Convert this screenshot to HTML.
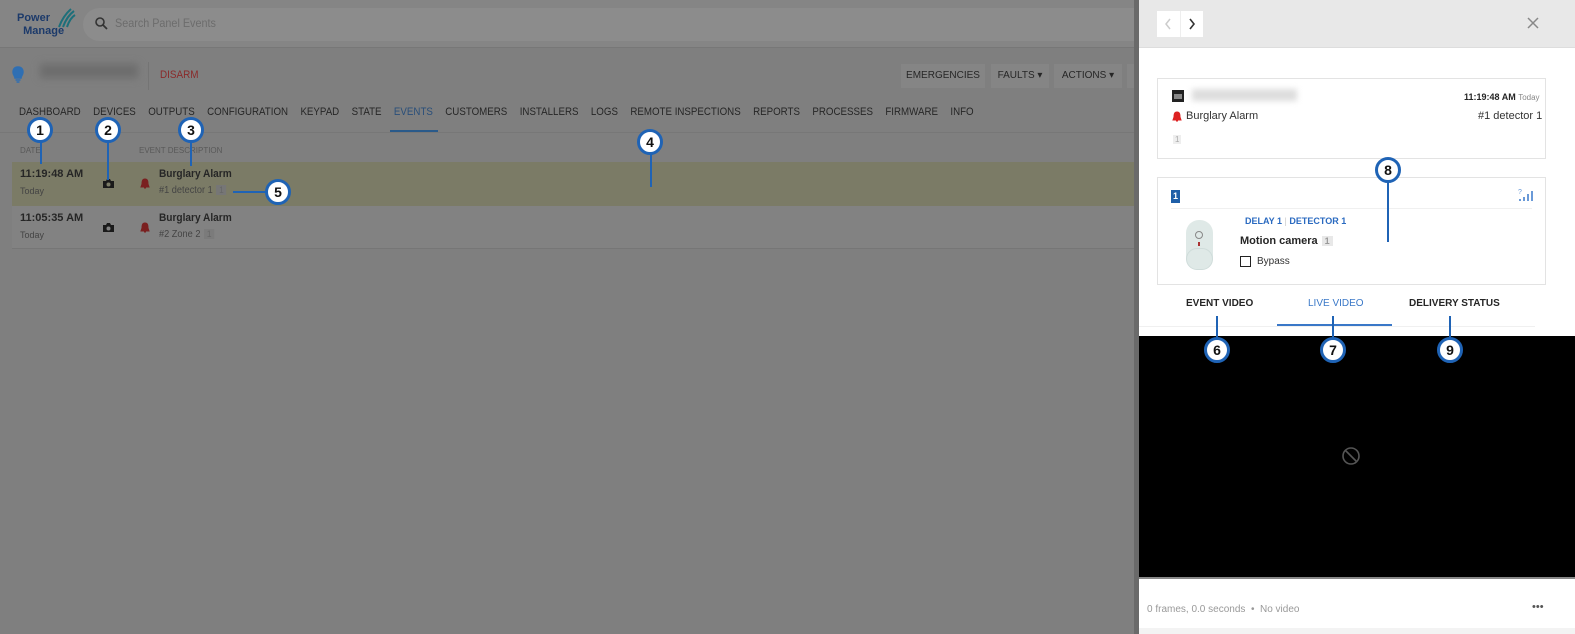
<!DOCTYPE html>
<html><head><meta charset="utf-8"><style>
*{box-sizing:border-box;margin:0;padding:0}
body{width:1575px;height:634px;overflow:hidden;position:relative;font-family:"Liberation Sans",sans-serif;background:#7f7f7f;font-size:12px;color:#262626}
.a{position:absolute;white-space:nowrap}
.nav span{margin-right:14px}
.c{position:absolute;width:26px;height:26px;border-radius:50%;background:#fff;border:3px solid #1f63b5;font-weight:bold;font-size:14px;text-align:center;line-height:20px;color:#111;z-index:5}
.l{position:absolute;background:#1f63b5;z-index:4}
.badge{display:inline-block;background:#e8e8e8;color:#999;font-size:9px;padding:0 3px;margin-left:4px}
.sq{transform-origin:left top}
</style></head><body>
<!-- top bar -->
<div class="a" style="left:0;top:0;width:1134px;height:48px;background:#858585;border-bottom:1px solid #777"></div>
<div class="a" style="left:17px;top:12px;font-weight:bold;font-size:11px;color:#1c3a6a;line-height:13px">Power<br>&nbsp;&nbsp;Manage</div>
<svg class="a" style="left:56px;top:7px" width="20" height="22"><path d="M3 20 Q7 9 15 2 M7 20 Q11 9 18 4 M11 20 Q14 11 19 8" stroke="#1d6f7a" stroke-width="2" fill="none"/></svg>
<div class="a" style="left:83px;top:8px;width:1051px;height:33px;border-radius:17px 0 0 17px;background:#8c8c8c"></div>
<svg class="a" style="left:94px;top:16px" width="14" height="14"><circle cx="6" cy="6" r="4" stroke="#333" stroke-width="1.6" fill="none"/><path d="M9 9 L13 13" stroke="#333" stroke-width="1.8"/></svg>
<div class="a sq" style="left:115px;top:16px;color:#6c6c6c;font-size:12px;transform:scaleX(.9)">Search Panel Events</div>
<!-- panel header row -->
<svg class="a" style="left:12px;top:66px" width="12" height="18"><path d="M6 1 C2 1 1 4 1 6 C1 9 3 10 3 12 L9 12 C9 10 11 9 11 6 C11 4 10 1 6 1Z M3.5 14 H8.5 M4.5 16 H7.5" fill="#2f6fb3" stroke="#2f6fb3" stroke-width="1.5"/></svg>
<div class="a" style="left:40px;top:64px;width:98px;height:14px;background:#6d6d6d;filter:blur(4px)"></div>
<div class="a" style="left:148px;top:62px;width:1px;height:28px;background:#747474"></div>
<div class="a sq" style="left:160px;top:69px;color:#8a2a2a;font-size:11px;transform:scaleX(.9)">DISARM</div>
<div class="a" style="left:901px;top:64px;width:84px;height:24px;background:#858585;text-align:center;line-height:24px;font-size:10px">EMERGENCIES</div>
<div class="a" style="left:991px;top:64px;width:58px;height:24px;background:#858585;text-align:center;line-height:24px;font-size:10px">FAULTS ▾</div>
<div class="a" style="left:1054px;top:64px;width:68px;height:24px;background:#858585;text-align:center;line-height:24px;font-size:10px">ACTIONS ▾</div>
<div class="a" style="left:1127px;top:64px;width:7px;height:24px;background:#858585"></div>
<div class="a nav sq" style="left:19px;top:106px;font-size:11px;color:#262626;transform:scaleX(.885)"><span>DASHBOARD</span><span>DEVICES</span><span>OUTPUTS</span><span>CONFIGURATION</span><span>KEYPAD</span><span>STATE</span><span style="color:#2a4f7a">EVENTS</span><span>CUSTOMERS</span><span>INSTALLERS</span><span>LOGS</span><span>REMOTE INSPECTIONS</span><span>REPORTS</span><span>PROCESSES</span><span>FIRMWARE</span><span>INFO</span></div>
<div class="a" style="left:390px;top:130px;width:48px;height:2px;background:#2a5a8a"></div>
<div class="a" style="left:0;top:132px;width:1134px;height:1px;background:#777"></div>
<div class="a" style="left:20px;top:146px;font-size:8px;color:#595959">DATE</div>
<div class="a" style="left:139px;top:146px;font-size:8px;color:#595959">EVENT DESCRIPTION</div>
<!-- rows -->
<div class="a" style="left:12px;top:162px;width:1122px;height:44px;background:#7b7b66"></div>
<div class="a" style="left:12px;top:206px;width:1122px;height:43px;background:#828282;border-bottom:1px solid #767676"></div>
<div class="a" style="left:20px;top:168px;font-size:11px;font-weight:bold">11:19:48 AM</div>
<div class="a" style="left:20px;top:186px;font-size:9px;color:#444">Today</div>
<div class="a" style="left:20px;top:212px;font-size:11px;font-weight:bold">11:05:35 AM</div>
<div class="a" style="left:20px;top:230px;font-size:9px;color:#444">Today</div>
<svg class="a" style="left:102px;top:178px" width="13" height="11"><path d="M1 3 H4 L5 1 H8 L9 3 H12 V10 H1Z" fill="#1a1a1a"/><circle cx="6.5" cy="6.5" r="2" fill="#7b7b66"/></svg>
<svg class="a" style="left:102px;top:222px" width="13" height="11"><path d="M1 3 H4 L5 1 H8 L9 3 H12 V10 H1Z" fill="#1a1a1a"/><circle cx="6.5" cy="6.5" r="2" fill="#828282"/></svg>
<svg class="a" style="left:140px;top:178px" width="10" height="12"><path d="M5 1 C2 1 2 4 2 6 L1 9 H9 L8 6 C8 4 8 1 5 1Z M4 10 H6" fill="#7a2020" stroke="#7a2020"/></svg>
<svg class="a" style="left:140px;top:222px" width="10" height="12"><path d="M5 1 C2 1 2 4 2 6 L1 9 H9 L8 6 C8 4 8 1 5 1Z M4 10 H6" fill="#7a2020" stroke="#7a2020"/></svg>
<div class="a sq" style="left:159px;top:168px;font-size:11px;font-weight:bold;transform:scaleX(.92)">Burglary Alarm</div>
<div class="a sq" style="left:159px;top:185px;font-size:10px;color:#444;transform:scaleX(.92)">#1 detector 1<span class="badge" style="background:#767676;color:#666">1</span></div>
<div class="a sq" style="left:159px;top:212px;font-size:11px;font-weight:bold;transform:scaleX(.92)">Burglary Alarm</div>
<div class="a sq" style="left:159px;top:229px;font-size:10px;color:#444;transform:scaleX(.92)">#2 Zone 2<span class="badge" style="background:#7b7b7b;color:#666">1</span></div>
<!-- callouts left -->
<div class="l" style="left:40px;top:140px;width:2px;height:24px"></div><div class="c" style="left:27px;top:117px">1</div>
<div class="l" style="left:107px;top:140px;width:2px;height:40px"></div><div class="c" style="left:95px;top:117px">2</div>
<div class="l" style="left:190px;top:140px;width:2px;height:26px"></div><div class="c" style="left:178px;top:117px">3</div>
<div class="l" style="left:650px;top:152px;width:2px;height:35px"></div><div class="c" style="left:637px;top:129px">4</div>
<div class="l" style="left:233px;top:191px;width:34px;height:2px"></div><div class="c" style="left:265px;top:179px">5</div>
<!-- right panel -->
<div class="a" style="left:1134px;top:0;width:441px;height:634px;background:#fff;border-left:5px solid #6a6a6a"></div>
<div class="a" style="left:1139px;top:0;width:436px;height:48px;background:#e8e8e8;border-bottom:1px solid #ddd"></div>
<div class="a" style="left:1157px;top:11px;width:46px;height:26px;background:#fff"></div>
<svg class="a" style="left:1164px;top:18px" width="8" height="12"><path d="M6 1 L2 6 L6 11" stroke="#ccc" stroke-width="1.5" fill="none"/></svg>
<svg class="a" style="left:1188px;top:18px" width="8" height="12"><path d="M2 1 L6 6 L2 11" stroke="#333" stroke-width="1.6" fill="none"/></svg>
<div class="a" style="left:1180px;top:11px;width:1px;height:26px;background:#eee"></div>
<svg class="a" style="left:1527px;top:17px" width="12" height="12"><path d="M1 1 L11 11 M11 1 L1 11" stroke="#888" stroke-width="1.5"/></svg>
<div class="a" style="left:1157px;top:78px;width:389px;height:81px;border:1px solid #e3e3e3"></div>
<svg class="a" style="left:1172px;top:90px" width="12" height="12"><rect x="0" y="0" width="12" height="12" fill="#222"/><rect x="2" y="4" width="8" height="5" fill="#888"/></svg>
<div class="a" style="left:1192px;top:89px;width:105px;height:12px;background:#ddd;filter:blur(3px)"></div>
<div class="a" style="left:1464px;top:92px;font-size:9px;font-weight:bold">11:19:48 AM <span style="font-weight:normal;color:#888;font-size:8px">Today</span></div>
<svg class="a" style="left:1172px;top:111px" width="10" height="12"><path d="M5 1 C2 1 2 4 2 6 L1 9 H9 L8 6 C8 4 8 1 5 1Z M4 10 H6" fill="#d22" stroke="#d22"/></svg>
<div class="a" style="left:1186px;top:110px;font-size:11px;color:#333">Burglary Alarm</div>
<div class="a" style="left:1478px;top:110px;font-size:11px;color:#333">#1 detector 1</div>
<div class="a" style="left:1173px;top:135px;font-size:8px;background:#eee;color:#aaa;padding:0 2px">1</div>
<div class="a" style="left:1157px;top:177px;width:389px;height:108px;border:1px solid #e3e3e3"></div>
<div class="a" style="left:1171px;top:190px;width:9px;height:13px;background:#1f5fa8;color:#fff;font-size:9px;text-align:center;line-height:13px;font-weight:bold">1</div>
<svg class="a" style="left:1518px;top:188px" width="16" height="14"><text x="0" y="6" font-size="7" fill="#6a9ad8" font-family="Liberation Sans">?</text><rect x="1" y="11" width="2" height="2" fill="#6a9ad8"/><rect x="5" y="9" width="2" height="4" fill="#6a9ad8"/><rect x="9" y="6" width="2" height="7" fill="#6a9ad8"/><rect x="13" y="3" width="2" height="10" fill="#6a9ad8"/></svg>
<div class="a" style="left:1171px;top:208px;width:361px;height:1px;background:#f0f0f0"></div>
<div class="a" style="left:1186px;top:220px;width:27px;height:50px;background:#dfe9e7;border-radius:13px"></div>
<div class="a" style="left:1186px;top:248px;width:27px;height:22px;border:1px solid #cfdcda;border-radius:13px"></div>
<div class="a" style="left:1195px;top:231px;width:8px;height:8px;border-radius:50%;border:1px solid #888"></div>
<div class="a" style="left:1198px;top:242px;width:2px;height:4px;background:#a33"></div>
<div class="a" style="left:1245px;top:216px;font-size:9px;color:#2a6ac0;font-weight:bold">DELAY 1 <span style="color:#ccc;font-weight:normal">|</span> DETECTOR 1</div>
<div class="a" style="left:1240px;top:235px;font-size:11px;font-weight:bold">Motion camera<span class="badge">1</span></div>
<div class="a" style="left:1240px;top:256px;width:11px;height:11px;border:1.5px solid #222"></div>
<div class="a" style="left:1257px;top:256px;font-size:10px;color:#333">Bypass</div>
<div class="a" style="left:1186px;top:298px;font-size:10px;font-weight:bold">EVENT VIDEO</div>
<div class="a" style="left:1308px;top:298px;font-size:10px;color:#3a78c8">LIVE VIDEO</div>
<div class="a" style="left:1409px;top:298px;font-size:10px;font-weight:bold">DELIVERY STATUS</div>
<div class="a" style="left:1139px;top:326px;width:396px;height:1px;background:#f0f0f0"></div>
<div class="a" style="left:1277px;top:324px;width:115px;height:2px;background:#3a78c8"></div>
<div class="a" style="left:1139px;top:336px;width:436px;height:241px;background:#000"></div>
<svg class="a" style="left:1341px;top:446px" width="20" height="20"><circle cx="10" cy="10" r="8" stroke="#555" stroke-width="1.6" fill="none"/><path d="M4.5 4.5 L15.5 15.5" stroke="#555" stroke-width="1.6"/></svg>
<div class="a" style="left:1139px;top:577px;width:436px;height:2px;background:#888"></div>
<div class="a" style="left:1147px;top:604px;font-size:10px;color:#999">0 frames, 0.0 seconds &nbsp;•&nbsp; No video</div>
<div class="a" style="left:1532px;top:601px;font-size:11px;color:#555">•••</div>
<div class="a" style="left:1139px;top:628px;width:436px;height:6px;background:#f3f3f3"></div>
<!-- callouts right -->
<div class="l" style="left:1387px;top:180px;width:2px;height:62px"></div><div class="c" style="left:1375px;top:157px">8</div>
<div class="l" style="left:1216px;top:316px;width:2px;height:24px"></div><div class="c" style="left:1204px;top:337px">6</div>
<div class="l" style="left:1332px;top:316px;width:2px;height:24px"></div><div class="c" style="left:1320px;top:337px">7</div>
<div class="l" style="left:1449px;top:316px;width:2px;height:24px"></div><div class="c" style="left:1437px;top:337px">9</div>
</body></html>
